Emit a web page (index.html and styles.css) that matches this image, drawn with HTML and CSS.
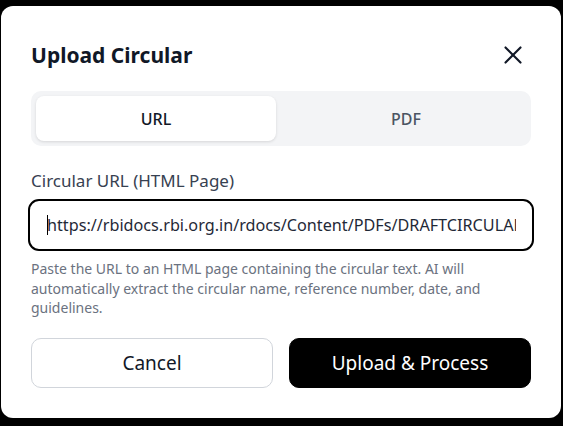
FILE: index.html
```html
<!DOCTYPE html>
<html lang="en">
<head>
<meta charset="utf-8">
<title>Upload Circular</title>
<link rel="stylesheet" href="styles.css">
</head>
<body>
<div class="modal">
  <div class="header">
    <h2 class="title">Upload Circular</h2>
    <button class="close" aria-label="Close">
      <svg width="30" height="30" viewBox="0 0 24 24" fill="none" stroke="#111827" stroke-width="1.7" stroke-linecap="round"><path d="M18 6 6 18"/><path d="m6 6 12 12"/></svg>
    </button>
  </div>
  <div class="tabs">
    <button class="tab active">URL</button>
    <button class="tab">PDF</button>
  </div>
  <label class="label" for="url">Circular URL (HTML Page)</label>
  <div class="input-wrap">
    <span class="caret"></span>
    <input id="url" class="input" type="text" value="https://rbidocs.rbi.org.in/rdocs/Content/PDFs/DRAFTCIRCULAR.html">
  </div>
  <p class="help">Paste the URL to an HTML page containing the circular text. AI will automatically extract the circular name, reference number, date, and guidelines.</p>
  <div class="actions">
    <button class="btn btn-cancel">Cancel</button>
    <button class="btn btn-primary">Upload &amp; Process</button>
  </div>
</div>
</body>
</html>
```

FILE: styles.css
```css
* { box-sizing: border-box; }
html, body { margin: 0; padding: 0; }
body {
  background: #000;
  width: 563px;
  height: 426px;
  overflow: hidden;
  font-family: "Noto Sans", "Open Sans", sans-serif;
}
.modal {
  margin: 6px 0 0 1px;
  width: 560px;
  height: 412px;
  background: #fff;
  border-radius: 12px;
  padding: 35px 30px 30px;
  display: flex;
  flex-direction: column;
}
.header {
  display: flex;
  justify-content: space-between;
  align-items: center;
  height: 28px;
  margin-bottom: 22px;
}
.title {
  margin: 0;
  font-size: 21px;
  font-weight: 700;
  line-height: 28px;
  color: #111827;
}
.close {
  border: 0;
  background: none;
  padding: 0;
  width: 30px;
  height: 30px;
  margin-right: 3px;
  display: flex;
}
.tabs {
  display: flex;
  gap: 10px;
  background: #f3f4f6;
  border-radius: 10px;
  padding: 5px;
  height: 55px;
}
.tab {
  flex: 1;
  border: 0;
  background: transparent;
  border-radius: 8px;
  font-family: inherit;
  font-size: 16px;
  font-weight: 500;
  color: #4b5563;
}
.tab.active {
  background: #fff;
  color: #111827;
  box-shadow: 0 1px 3px rgba(0,0,0,0.12);
}
.label {
  margin-top: 23px;
  font-size: 17px;
  line-height: 24px;
  color: #374151;
}
.input-wrap {
  position: relative;
  margin: 6px -3px 0 -3px;
}
.input {
  display: block;
  width: 100%;
  height: 52px;
  border: 2px solid #000;
  border-radius: 11px;
  padding: 0 16px 0 17px;
  font-family: inherit;
  font-size: 16.2px;
  color: #1f2937;
  outline: none;
}
.caret {
  position: absolute;
  left: 19px;
  top: 16px;
  width: 1px;
  height: 20px;
  background: #000;
}
.help {
  margin: 8px 0 0;
  font-size: 14px;
  line-height: 19.5px;
  color: #6b7280;
}
.actions {
  margin-top: auto;
  display: flex;
  gap: 16px;
}
.btn {
  flex: 1;
  height: 50px;
  border-radius: 10px;
  font-family: inherit;
  font-size: 19px;
}
.btn-cancel {
  background: #fff;
  border: 1px solid #d1d5db;
  color: #111827;
}
.btn-primary {
  background: #000;
  border: 1px solid #000;
  color: #fff;
}
```
